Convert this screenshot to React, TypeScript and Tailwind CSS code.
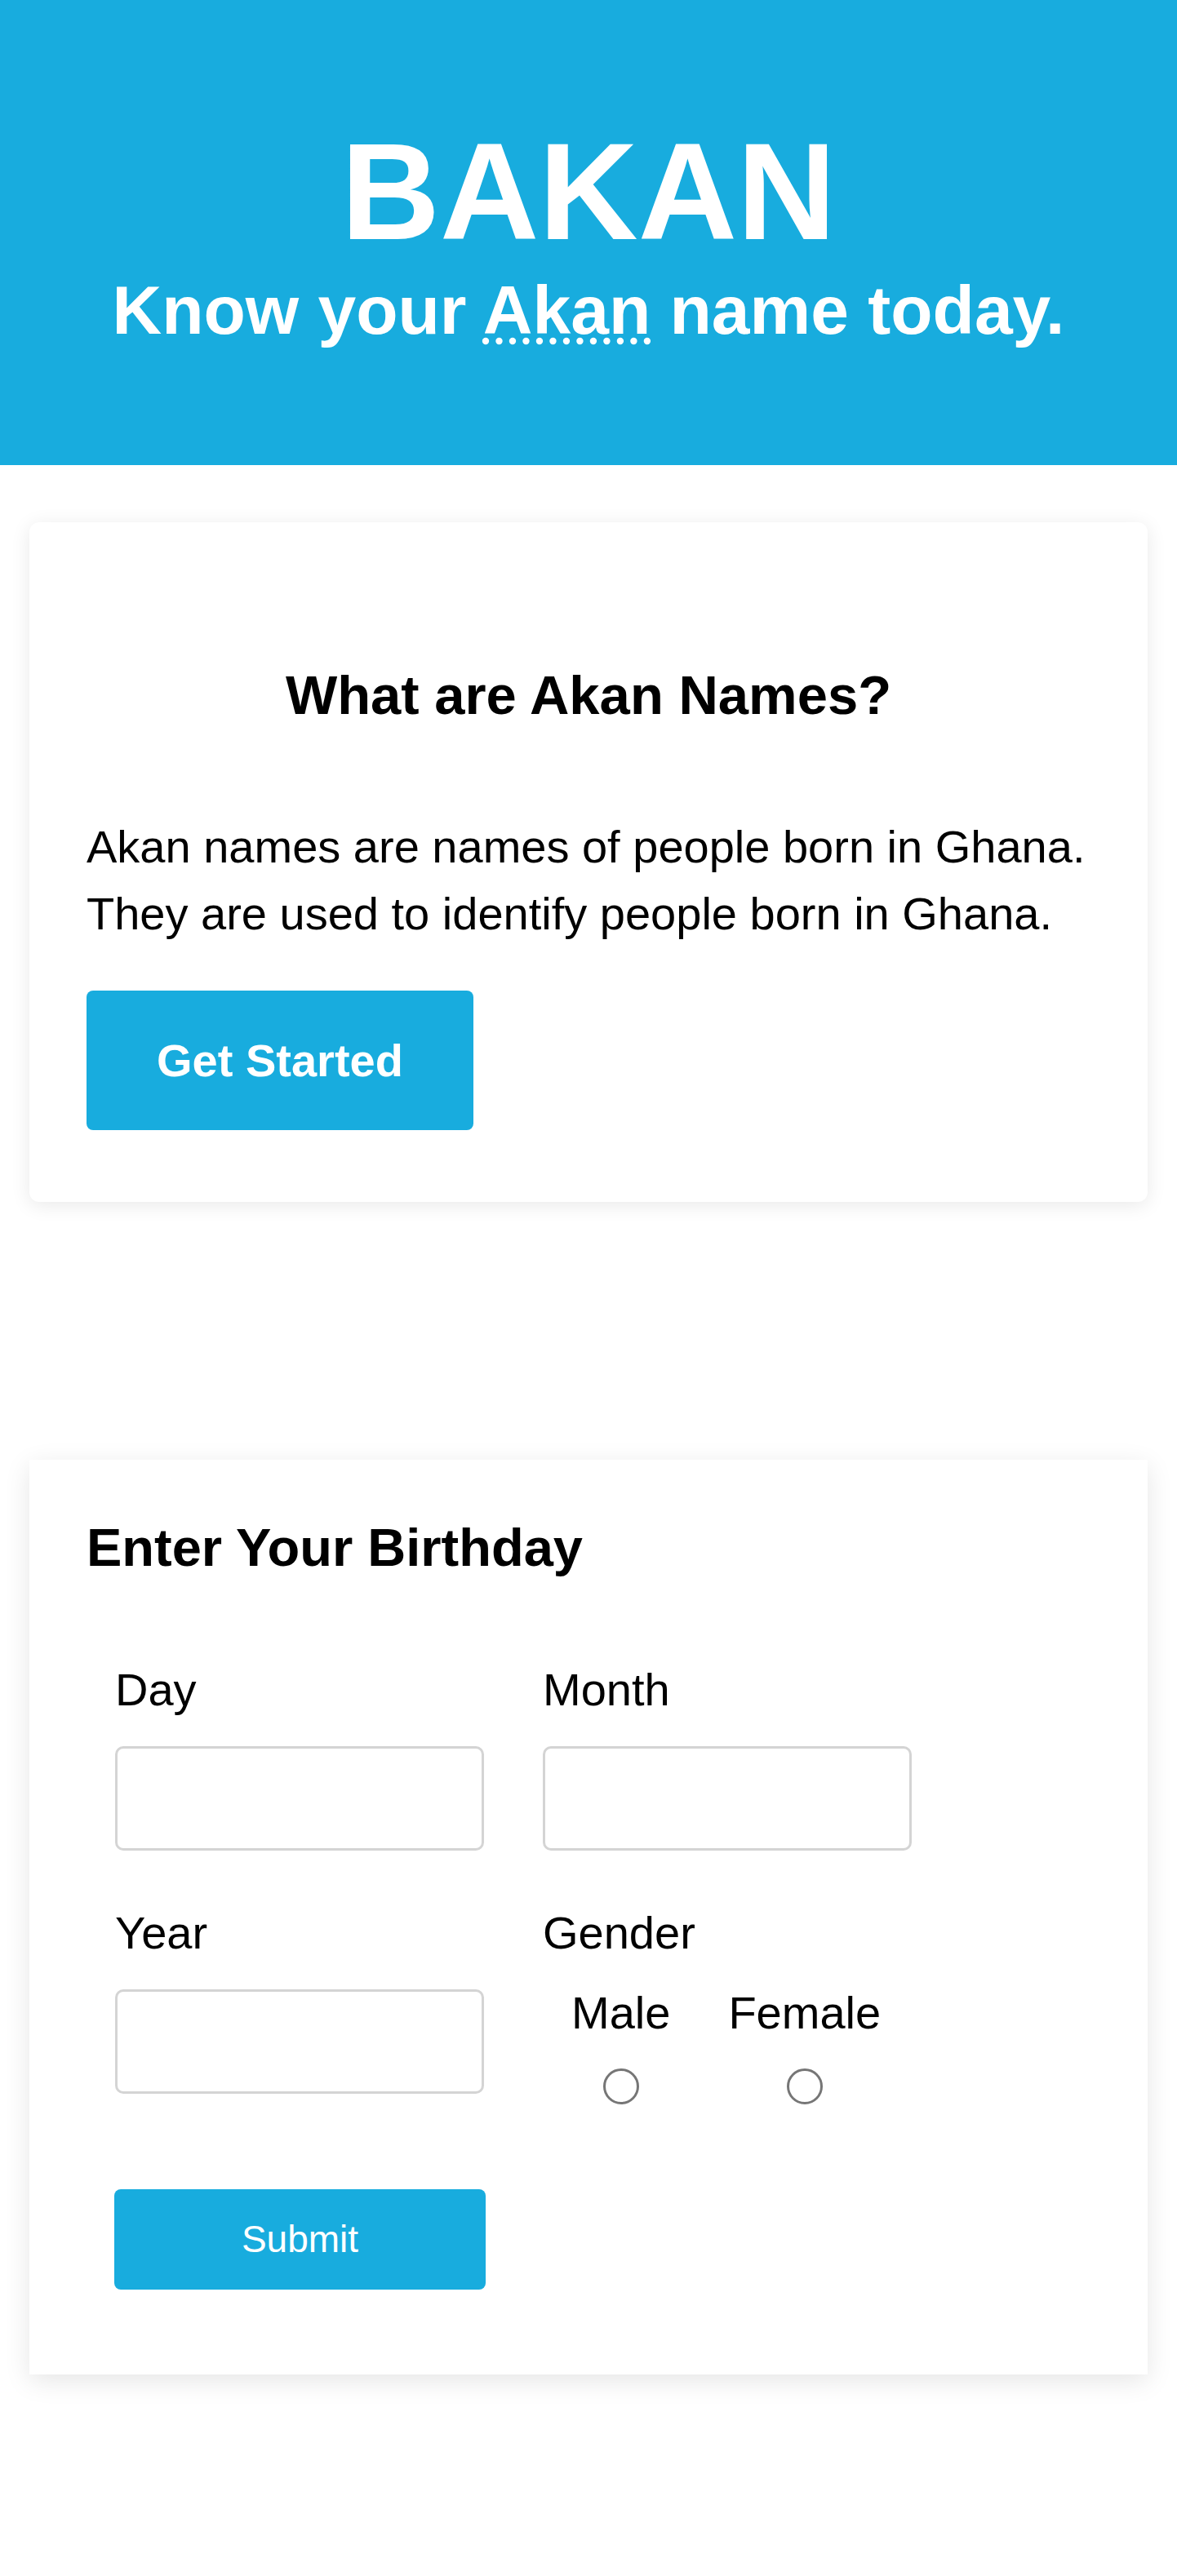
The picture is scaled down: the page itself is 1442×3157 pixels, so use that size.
import React from 'react';

const Header: React.FC = () => {
  return (
    <header className="bg-[#18acde] text-white text-center pt-[139px] pb-[141px]">
      <h1 className="text-[168px] leading-[193px] font-bold">BAKAN</h1>
      <p className="text-[84px] leading-[97px] font-bold">
        Know your <abbr title="A people group in Ghana">Akan</abbr> name today.
      </p>
    </header>
  );
};

const About: React.FC = () => {
  return (
    <section className="mt-[70px] bg-white rounded-xl shadow-[0_4px_24px_rgba(0,0,0,0.09)] pt-[173px] pb-[88px] pl-[70px] pr-[30px]">
      <h2 className="text-[67px] leading-[77px] font-bold text-center pr-[40px]">
        What are Akan Names?
      </h2>
      <p className="mt-[107px] text-[56px] leading-[82px] whitespace-nowrap">
        Akan names are names of people born in Ghana.
        <br />
        They are used to identify people born in Ghana.
      </p>
      <button className="mt-[53px] w-[474px] h-[171px] rounded-lg bg-[#18acde] text-white text-[56px] font-bold flex items-center justify-center">
        Get Started
      </button>
    </section>
  );
};

interface FieldProps {
  label: string;
  name: string;
}

const Field: React.FC<FieldProps> = ({ label, name }) => (
  <div className="flex flex-col">
    <label htmlFor={name} className="text-[56px] leading-[64px]">
      {label}
    </label>
    <input
      id={name}
      name={name}
      type="text"
      className="mt-[37px] w-[452px] h-[128px] border-[3px] border-[#d4d4d4] rounded-[10px] bg-white focus:outline-0"
    />
  </div>
);

const BirthdayForm: React.FC = () => {
  const genders = ['Male', 'Female'];

  return (
    <section className="mt-[316px] bg-white shadow-[0_8px_30px_rgba(0,0,0,0.1)] pt-[70px] pb-[104px] px-[70px]">
      <h2 className="text-[65px] leading-[75px] font-bold">Enter Your Birthday</h2>
      <form
        className="mt-[105px] pl-[35px]"
        onSubmit={(e) => e.preventDefault()}
      >
        <div className="grid grid-cols-[452px_452px] gap-x-[72px] gap-y-[69px]">
          <Field label="Day" name="day" />
          <Field label="Month" name="month" />
          <Field label="Year" name="year" />
          <div className="flex flex-col">
            <span className="text-[56px] leading-[64px]">Gender</span>
            <div className="mt-[34px] pl-[35px] flex gap-[71px]">
              {genders.map((g) => (
                <label key={g} className="flex flex-col items-center cursor-pointer">
                  <span className="text-[56px] leading-[64px]">{g}</span>
                  <input
                    type="radio"
                    name="gender"
                    value={g.toLowerCase()}
                    className="mt-[36px] appearance-none w-[44px] h-[44px] rounded-full border-[3px] border-[#767676] bg-white"
                  />
                </label>
              ))}
            </div>
          </div>
        </div>
        <button
          type="submit"
          className="mt-[104px] -ml-[1px] w-[455px] h-[123px] rounded-lg bg-[#18acde] text-white text-[46px]"
        >
          Submit
        </button>
      </form>
    </section>
  );
};

export default function App() {
  return (
    <div className="min-h-[3157px] bg-white text-black font-['Liberation_Sans',Arial,sans-serif]">
      <Header />
      <main className="px-[36px]">
        <About />
        <BirthdayForm />
      </main>
    </div>
  );
}
